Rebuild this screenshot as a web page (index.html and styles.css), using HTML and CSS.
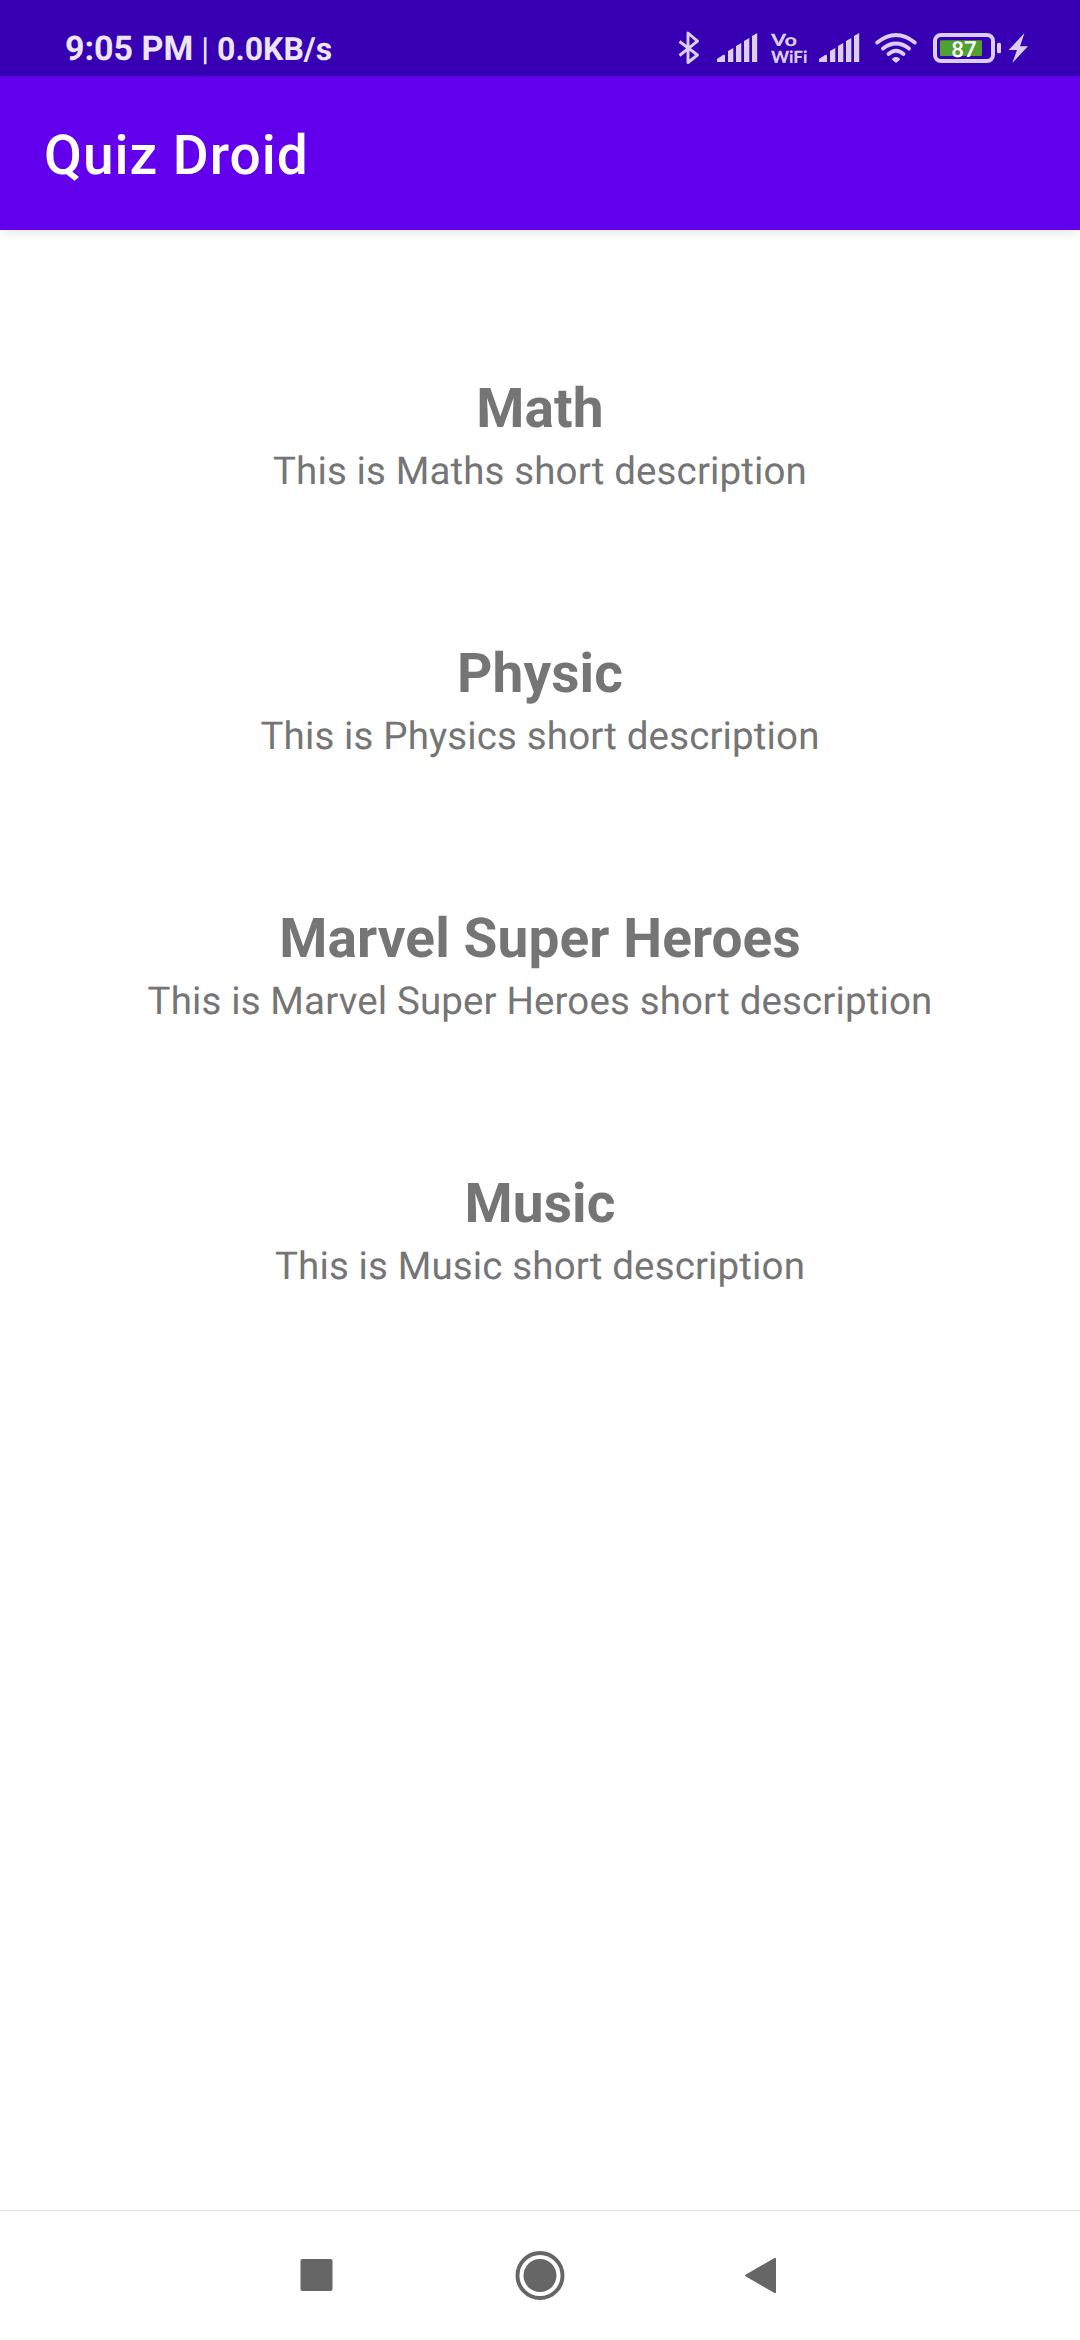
FILE: index.html
```html
<!DOCTYPE html>
<html lang="en">
<head>
<meta charset="utf-8">
<title>Quiz Droid</title>
<link rel="stylesheet" href="styles.css">
</head>
<body>
<header class="status">
  <div class="clock"><b class="time">9:05 PM</b><span class="divider">|</span><b>0.0KB/s</b></div>
  <div class="indicators">
    <svg width="40" height="76" viewBox="0 0 40 76"><path d="M7.5 41.5L25.5 55L16 62.5V33L25.5 41.2L7.5 55.5" fill="none" stroke="#d9cef3" stroke-width="2.9" stroke-linejoin="round"/></svg>
    <svg width="52" height="76" viewBox="0 0 52 76"><path d="M5 62V59L11 55Q13 54 13 56V62ZM16 62V51L21.3 48V62ZM24 62V46L29.3 43V62ZM32 62V41L37.3 38V62ZM40 62V36L45.2 33V62Z"/></svg>
    <svg class="vowifi" width="50" height="76" viewBox="0 0 50 76"><text x="7" y="45.5" textLength="26" lengthAdjust="spacingAndGlyphs">Vo</text><text x="7" y="62.7" textLength="36.5" lengthAdjust="spacingAndGlyphs">WiFi</text></svg>
    <svg width="52" height="76" viewBox="0 0 52 76"><path d="M5 62V59L11 55Q13 54 13 56V62ZM16 62V51L21.3 48V62ZM24 62V46L29.3 43V62ZM32 62V41L37.3 38V62ZM40 62V36L45.2 33V62Z"/></svg>
    <svg width="60" height="76" viewBox="0 0 60 76"><g fill="none" stroke="#d9cef3" stroke-width="3.9" stroke-linecap="round"><path d="M11.2 42.5Q30 27.5 48.8 42.5M17 48.5Q30 38.5 43 48.5M22.5 54Q30 47.5 37.5 54"/></g><path d="M27 59.2Q30 57 33 59.2L30 61.8Z" stroke="#d9cef3" stroke-width="2" stroke-linejoin="round"/></svg>
    <svg width="78" height="76" viewBox="0 0 78 76"><rect x="9" y="35" width="58" height="26" rx="6" fill="none" stroke="#d9cef3" stroke-width="4"/><rect x="14" y="40.3" width="42" height="15.7" rx="1" fill="#50a230"/><rect x="71" y="42.7" width="4" height="10.6" rx="1.6"/><text class="charge" x="25.2" y="56.5" textLength="25.5" lengthAdjust="spacingAndGlyphs">87</text></svg>
    <svg width="30" height="76" viewBox="0 0 30 76"><path d="M20.5 33L4.7 50H13L8.3 63L24 46.2H16Z"/></svg>
  </div>
</header>
<div class="appbar"><h1>Quiz Droid</h1></div>
<main class="topics">
  <section class="topic"><h2>Math</h2><p>This is Maths short description</p></section>
  <section class="topic"><h2>Physic</h2><p>This is Physics short description</p></section>
  <section class="topic"><h2>Marvel Super Heroes</h2><p>This is Marvel Super Heroes short description</p></section>
  <section class="topic"><h2>Music</h2><p>This is Music short description</p></section>
</main>
<nav class="navbar">
  <svg width="50" height="50" viewBox="0 0 50 50"><rect x="9.5" y="8" width="32" height="32" rx="2"/></svg>
  <svg width="50" height="50" viewBox="0 0 50 50"><circle cx="25" cy="24.5" r="22.5" fill="none" stroke="#666" stroke-width="3.9"/><circle cx="25" cy="24.5" r="16.5"/></svg>
  <svg width="50" height="50" viewBox="0 0 50 50"><path d="M6 24.5L35 7.8V41.2Z" stroke="#666" stroke-width="2" stroke-linejoin="round"/></svg>
</nav>
</body>
</html>
```

FILE: styles.css
```css
* { box-sizing: border-box; margin: 0; }
body { height: 2340px; font-family: Roboto, sans-serif; background: #fff; color: #757575; display: flex; flex-direction: column; text-rendering: geometricPrecision; }
svg { display: block; }
.status { height: 76px; background: #3700b3; display: flex; justify-content: space-between; padding-left: 65px; padding-right: 46px; }
.clock { color: #ebe5f7; font-size: 32px; line-height: 98px; display: flex; align-items: baseline; }
.time { font-size: 34px; }
.divider { margin: 0 8px 0 8px; }
.indicators { display: flex; fill: #d9cef3; }
.vowifi { font: 900 17px Lato, sans-serif; }
.charge { fill: #fff; font-size: 22px; font-weight: 500; }
.appbar { height: 154px; background: #6200ee; padding-left: 44px; box-shadow: 0 8px 9px -3px rgba(0, 0, 0, .08); }
.appbar h1 { color: #fff; font-size: 55px; font-weight: 500; line-height: 161px; letter-spacing: 1px; }
.topics { flex: 1; padding-top: 142px; text-align: center; }
.topic { height: 265px; }
.topic h2 { font-size: 55px; line-height: 74px; letter-spacing: .1px; }
.topic p { font-size: 38.5px; line-height: 51px; letter-spacing: .13px; }
.navbar { height: 130px; border-top: 1px solid #e3e3e3; display: flex; justify-content: center; align-items: center; gap: 174.5px; fill: #666; }
```
